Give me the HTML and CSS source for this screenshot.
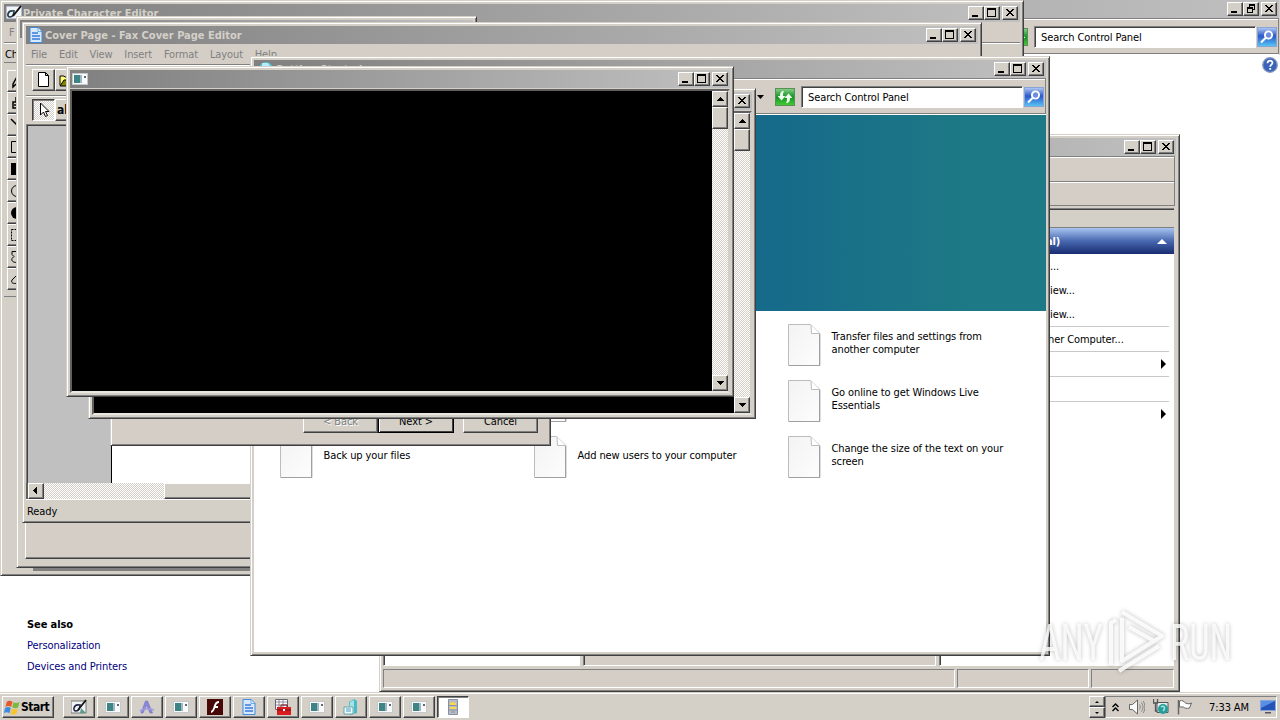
FILE: index.html
```html
<!DOCTYPE html>
<html lang="en">
<head>
<meta charset="utf-8">
<title>Desktop</title>
<link rel="stylesheet" href="styles.css">
</head>
<body>
<svg class="defs" width="0" height="0">
  <defs>
    <linearGradient id="paper" x1="0" y1="0" x2="1" y2="1"><stop offset="0" stop-color="#f3f3f3"/><stop offset="1" stop-color="#fdfdfd"/></linearGradient>
    <linearGradient id="blue" x1="0" y1="0" x2="0" y2="1"><stop offset="0" stop-color="#b4ccf4"/><stop offset=".45" stop-color="#2c58cc"/><stop offset="1" stop-color="#58c8f4"/></linearGradient>
    <linearGradient id="green" x1="0" y1="0" x2="0" y2="1"><stop offset="0" stop-color="#8ad08a"/><stop offset=".5" stop-color="#109420"/><stop offset="1" stop-color="#48cc38"/></linearGradient>
  </defs>
  <symbol id="min" viewBox="0 0 12 10"><path d="M2 7h6v2H2z"/></symbol>
  <symbol id="max" viewBox="0 0 12 10"><path d="M1 0h9v9H1zM2 2v6h7V2z" fill-rule="evenodd"/></symbol>
  <symbol id="restore" viewBox="0 0 12 10"><path d="M4 0h6v6H8V5h1V2H5v1H4zM2 3h6v6H2zM3 5v3h4V5z" fill-rule="evenodd"/></symbol>
  <symbol id="close" viewBox="0 0 12 10"><path d="M2 1h2v1h1v1h2V2h1V1h2v1H9v1H8v1H7v1h1v1h1v1h1v1H8V7H7V6H5v1H4v1H2V7h1V6h1V5h1V4H4V3H3V2H2z"/></symbol>
  <symbol id="doc" viewBox="0 0 33 42"><path d="M.5.5h22l9.500 9v32H.5z" fill="url(#paper)" stroke="#bcbcbc"/><path d="M23 1l.5 8.500h8" fill="#fff" stroke="#bcbcbc"/><path d="M1 41.500h31M31.500 10v32" stroke="#a0a0a0" fill="none"/></symbol>
  <symbol id="search" viewBox="0 0 20 20"><rect x=".5" y=".5" width="19" height="19" fill="url(#blue)" stroke="#8aa4d8"/><circle cx="11.500" cy="8" r="3.600" fill="#6d8de0" stroke="#fff" stroke-width="1.900"/><path d="M8.500 11L4 15.500" stroke="#fff" stroke-width="2.200"/></symbol>
  <symbol id="refresh" viewBox="0 0 20 18"><rect x=".5" y=".5" width="19" height="17" fill="url(#green)" stroke="#589058"/><path d="M9 3C6 3 5 5 5 8H2.500l4 4.500 4-4.500H8c0-2 0-3.500 1-5zM11 15c3 0 4-2 4-5h2.500l-4-4.500-4 4.500H12c0 2 0 3.500-1 5z" fill="#f0fff0"/></symbol>
  <symbol id="con" viewBox="0 0 16 12"><rect x=".5" y=".5" width="15" height="11" fill="#fafafa" stroke="#c4c8cc"/><rect x="2" y="2" width="6" height="8" fill="#3f8484"/><path d="M8 2h2v8H8z" fill="#9cb8c4"/><path d="M12 3h2v2h-2z" fill="#606878"/></symbol>
  <symbol id="fax" viewBox="0 0 14 16"><path d="M1 .5h8l4 4v11H1z" fill="#d7eafc" stroke="#438adb"/><path d="M9 .5v4h4z" fill="#f6fbff" stroke="#438adb" stroke-width=".7"/><path d="M3 6h6M3 9h8M3 12h8" stroke="#3c78dc" stroke-width="1.600"/></symbol>
  <symbol id="pce" viewBox="0 0 16 16"><path d="M0 1h16v13H0z" fill="#f2f5f8" stroke="#889"/><path d="M7 6C2 5 0 12 4 12s4-5 4-7" fill="none" stroke="#223c50" stroke-width="1.700"/><path d="M15 1L7 11" stroke="#111" stroke-width="2"/></symbol>
  <symbol id="up" viewBox="0 0 12 12"><path d="M6 4h1v1h1v1h1v1h1v1H3V7h1V6h1V5h1z"/></symbol>
  <symbol id="down" viewBox="0 0 12 12"><path d="M3 4h7v1H9v1H8v1H7v1H6V7H5V6H4V5H3z"/></symbol>
</svg>

<main class="desktop">
  <section class="win w-panel">
    <header class="title"><span class="ctl"><b><svg><use href="#min"/></svg></b><b><svg><use href="#restore"/></svg></b><b><svg><use href="#close"/></svg></b></span></header>
    <div class="nav"><svg class="refresh"><use href="#refresh"/></svg><div class="field">Search Control Panel</div><svg class="go"><use href="#search"/></svg></div>
    <div class="panel-body">
      <svg class="help" viewBox="0 0 16 16"><circle cx="8" cy="8" r="7.300" fill="#3a64b8" stroke="#8c9cc0" stroke-width="1.300"/><path d="M5.500 6.200c0-3.400 5-3.200 5-.4 0 1.800-2.300 1.900-2.300 4" fill="none" stroke="#fff" stroke-width="1.700"/><path d="M7.300 11h1.800v1.800H7.300z" fill="#fff"/></svg>
      <nav class="also"><strong>See also</strong><a>Personalization</a><a>Devices and Printers</a></nav>
    </div>
  </section>

  <section class="win w-event">
    <header class="title"><span class="ctl"><b><svg><use href="#min"/></svg></b><b><svg><use href="#max"/></svg></b><b><svg><use href="#close"/></svg></b></span></header>
    <div class="bar"></div><div class="bar second"></div>
    <div class="panes">
      <div class="pane p-tree"></div><div class="pane p-mid"></div>
      <div class="pane p-act">
        <div class="act-head"></div>
        <div class="act-blue"><span>al)</span><svg viewBox="0 0 10 5"><path d="M5 0l5 5H0z" fill="#fff"/></svg></div>
        <ul>
          <li>...</li><li>iew...</li><li>iew...</li><li class="rule other">her Computer...</li>
          <li class="rule"><i></i></li><li class="rule"></li><li class="rule"><i></i></li>
        </ul>
      </div>
    </div>
    <div class="cells"><div></div><div></div><div></div></div>
  </section>

  <section class="win w-pce">
    <header class="title"><svg class="ico"><use href="#pce"/></svg><span class="name">Private Character Editor</span><span class="ctl"><b><svg><use href="#min"/></svg></b><b><svg><use href="#max"/></svg></b><b><svg><use href="#close"/></svg></b></span></header>
    <div class="pce-menu">F</div>
    <div class="pce-ch">Ch</div>
    <div class="tools">
      <b><svg viewBox="0 0 16 18"><path d="M9 3L4 12v3l3-3" fill="none" stroke="#000" stroke-width="1.500"/></svg></b>
      <b><svg viewBox="0 0 16 18"><path d="M7 3v5H4v6h8M5 11h6" fill="none" stroke="#000" stroke-width="1.500"/></svg></b>
      <b><svg viewBox="0 0 16 18"><path d="M2 3l10 10" stroke="#000" stroke-width="1.500"/></svg></b>
      <b><svg viewBox="0 0 16 18"><path d="M2.500 3.500h12v11h-12z" fill="none" stroke="#000"/></svg></b>
      <b><svg viewBox="0 0 16 18"><path d="M2 3h12v12H2z"/></svg></b>
      <b><svg viewBox="0 0 16 18"><circle cx="8" cy="9" r="5.500" fill="none" stroke="#000"/></svg></b>
      <b><svg viewBox="0 0 16 18"><circle cx="8" cy="9" r="6"/></svg></b>
      <b><svg viewBox="0 0 16 18"><path d="M2.500 3.500h12v11h-12z" fill="none" stroke="#000" stroke-dasharray="2 1"/></svg></b>
      <b><svg viewBox="0 0 16 18"><path d="M8 3.500H3v3l2 2-2 2c-1 3 2 4 5 4" fill="none" stroke="#000"/></svg></b>
      <b><svg viewBox="0 0 16 18"><path d="M9 4L3 10c-1 3 0 3.500 6 3.500" fill="none" stroke="#000"/></svg></b>
    </div>
    <div class="pce-edge"></div>
  </section>

  <section class="win w-blank"><header class="title"></header><div class="raised"></div></section>

  <section class="win w-fax">
    <header class="title"><svg class="ico"><use href="#fax"/></svg><span class="name">Cover Page - Fax Cover Page Editor</span><span class="ctl"><b><svg><use href="#min"/></svg></b><b><svg><use href="#max"/></svg></b><b><svg><use href="#close"/></svg></b></span></header>
    <div class="menu"><span>File</span><span>Edit</span><span>View</span><span>Insert</span><span>Format</span><span>Layout</span><span>Help</span></div>
    <div class="tb">
      <b><svg viewBox="0 0 16 16"><path d="M2.500.5h7l3 3v11h-10zM9.500.5v3h3" fill="#fff" stroke="#000"/></svg></b>
      <b><svg viewBox="0 0 16 16"><path d="M1 13V4h4l1 1h6v3" fill="#ffff70" stroke="#000"/><path d="M1 14L5 8h11l-4 6z" fill="#848400" stroke="#000"/></svg></b>
    </div>
    <div class="tb two">
      <b class="on"><svg viewBox="0 0 16 16"><path d="M4.500 1v12l3-3 2 4.500 2-1-2-4H13z" fill="#fff" stroke="#000"/></svg></b>
      <b class="ab">ab|</b>
    </div>
    <div class="canvas"><div class="sheet"></div></div>
    <div class="hscroll"><b><svg viewBox="0 0 12 12"><path d="M7 2v7H6V8H5V7H4V6H3V5h1V4h1V3h1V2z"/></svg></b><i></i></div>
    <div class="ready">Ready</div>
  </section>

  <section class="win w-start">
    <header class="title"><svg class="ico" viewBox="0 0 16 16"><circle cx="8" cy="8" r="7" fill="#58bcd0"/><path d="M4 2h6l3 4H4z" fill="#b8ecf8"/></svg><span class="name">Getting Started</span><span class="ctl"><b><svg><use href="#min"/></svg></b><b><svg><use href="#max"/></svg></b><b><svg><use href="#close"/></svg></b></span></header>
    <div class="nav"><svg class="caret" viewBox="0 0 7 4"><path d="M0 0h7L3.500 4z"/></svg><svg class="refresh"><use href="#refresh"/></svg><div class="field">Search Control Panel</div><svg class="go"><use href="#search"/></svg></div>
    <div class="start-body">
      <div class="banner"></div>
      <div class="grid">
        <div></div><div></div><div><svg><use href="#doc"/></svg><p>Transfer files and settings from<br>another computer</p></div>
        <div></div><div><svg><use href="#doc"/></svg></div><div><svg><use href="#doc"/></svg><p>Go online to get Windows Live<br>Essentials</p></div>
        <div><svg><use href="#doc"/></svg><p>Back up your files</p></div><div><svg><use href="#doc"/></svg><p>Add new users to your computer</p></div><div><svg><use href="#doc"/></svg><p>Change the size of the text on your<br>screen</p></div>
      </div>
    </div>
  </section>

  <section class="win w-wiz"><div class="wiz-btns"><span class="off">&lt; Back</span><span class="def">Next &gt;</span><span class="cancel">Cancel</span></div></section>

  <section class="win con c2">
    <header class="title"><span class="ctl"><b><svg><use href="#close"/></svg></b></span></header>
    <div class="screen"><div class="vscroll"><b><svg><use href="#up"/></svg></b><i></i><b class="end"><svg><use href="#down"/></svg></b></div></div>
  </section>
  <section class="win con c1">
    <header class="title"><svg class="ico cico"><use href="#con"/></svg><span class="ctl"><b><svg><use href="#min"/></svg></b><b><svg><use href="#max"/></svg></b><b><svg><use href="#close"/></svg></b></span></header>
    <div class="screen"><div class="vscroll"><b><svg><use href="#up"/></svg></b><i></i><b class="end"><svg><use href="#down"/></svg></b></div></div>
  </section>

  <footer class="taskbar">
    <div class="start"><svg viewBox="0 0 18 18"><path d="M3 3c2-1.500 4-1.500 6 0L7.500 8.500c-2-1.300-4-1.300-6 0z" fill="#e8562a"/><path d="M10 3.500c2 1 4 1 6.500-.3L15 8.800c-2 1.200-4 1.200-6.300 0z" fill="#7cb83c"/><path d="M1.200 9.500c2-1.300 4-1.300 6 0L5.800 15c-2-1.300-4-1.300-6 0z" fill="#3c8ce0"/><path d="M8.400 10c2 1.200 4 1.200 6.300 0l-1.500 5.600c-2 1.200-4 1.200-6.300 0z" fill="#f6c42c"/></svg>Start</div>
    <div class="tasks">
      <b><svg viewBox="0 0 16 16"><path d="M0 2h15v12H0z" fill="#eef3f3" stroke="#777"/><path d="M8 6C3 5 1 12 5 12s4-5 4-7" fill="none" stroke="#224" stroke-width="1.500"/><path d="M15 1L7 11" stroke="#111" stroke-width="1.800"/><path d="M10 9l5 5h-6z" fill="#5c9c8c"/></svg></b>
      <b><svg class="c"><use href="#con"/></svg></b>
      <b><svg viewBox="0 0 16 16"><path d="M2 14L6.500 2h2l5 12h-2.500L7.500 6 4 14z" fill="#8c88dc" stroke="#6c70b8" stroke-width=".6"/><path d="M1 12c4-3 9-3 14-1" fill="none" stroke="#a09ce4" stroke-width="1.800"/></svg></b>
      <b><svg class="c"><use href="#con"/></svg></b>
      <b><svg viewBox="0 0 16 16"><path d="M0 0h16v16H0z" fill="#480808"/><path d="M12 3C8 3 8 7 7 9.500S5.500 13 4 13M7 8h4" fill="none" stroke="#fff" stroke-width="1.900"/></svg></b>
      <b><svg><use href="#fax"/></svg></b>
      <b><svg viewBox="0 0 16 16"><path d="M.5.500h12v10H.5z" fill="#fff" stroke="#667"/><path d="M1 3h11M1 6h11M4 1v9M8 1v9" stroke="#778" stroke-width=".8"/><path d="M2 8h14v8H2z" fill="#d81c20"/><path d="M6 8V6h6v2M2 11h14" fill="none" stroke="#801014"/><path d="M8 10h2v2H8z" fill="#fff"/></svg></b>
      <b><svg class="c"><use href="#con"/></svg></b>
      <b><svg viewBox="0 0 16 16"><path d="M6 3l5-3 3 2v12l-7 2z" fill="#4cb8c4"/><path d="M7 3l4-2v13l-4 1z" fill="#a0e4e8"/><path d="M1 8h9v7H1z" fill="#f0ffff" stroke="#64a4ac"/><path d="M3 10h5M3 12h5" stroke="#4894bc"/></svg></b>
      <b><svg class="c"><use href="#con"/></svg></b>
      <b><svg class="c"><use href="#con"/></svg></b>
      <b class="on"><svg viewBox="0 0 16 16"><path d="M3.500.5h9v15h-9z" fill="#b8bcc8" stroke="#8a909c"/><path d="M5 4l2-1 4 1v2H5zM5 8h6v2H5z" fill="#f8d84c"/><path d="M4 6.500h8M4 11h8M6 13h4" stroke="#8a92a4"/></svg></b>
    </div>
    <div class="spin"><b><svg viewBox="0 0 12 6"><path d="M6 2l2 2H4z"/></svg></b><b><svg viewBox="0 0 12 6"><path d="M4 2h4L6 4z"/></svg></b></div>
    <div class="tray">
      <svg class="chev" viewBox="0 0 7 9"><path d="M.5 4l3-3 3 3M.5 8l3-3 3 3" fill="none" stroke="#000" stroke-width="1.400"/></svg>
      <svg class="spk" viewBox="0 0 16 16"><path d="M.5 5.500h3l5-4.500v14L3.500 10.500h-3z" fill="#fafafa" stroke="#666"/><path d="M10.500 5.500c1 1.500 1 3.500 0 5M12.500 3.500c2 3 2 6 0 9M14.300 2c2 4 2 8 0 12" fill="none" stroke="#888"/></svg>
      <svg class="net" viewBox="0 0 16 16"><path d="M4 3.500h11v10H4z" fill="#e4f0f0" stroke="#555"/><circle cx="10" cy="10" r="5" fill="#289c9c"/><path d="M8 8c3-2 5 1 2 4" stroke="#9ee8d8" stroke-width="1.500" fill="none"/><path d="M.5 0v4h4V0M2.500 4v8h2" fill="none" stroke="#555" stroke-width="1.300"/></svg>
      <svg class="flag" viewBox="0 0 16 16"><path d="M1.500 1v14.500" stroke="#666" stroke-width="1.500"/><path d="M2.500 2c3-1 4 0 6 2 2 1 4 1 6 0l-2 5c-3 1-5 0-6-1H2.500z" fill="#fcfcfc" stroke="#666"/></svg>
      <span class="clock">7:33 AM</span>
      <svg class="mon" viewBox="0 0 16 14"><path d="M.5.500h15v10H.5z" fill="#2454b8" stroke="#8ca4d8"/><path d="M1 1h14L1 8z" fill="#5890e4"/><path d="M5 12h6v1.500H5z" fill="#556"/></svg>
    </div>
  </footer>

  <svg class="mark" viewBox="0 0 220 70">
    <g fill="#fff" fill-opacity=".8" font-family="Roboto, sans-serif" font-size="50"><text x="3" y="54" textLength="64" lengthAdjust="spacingAndGlyphs">ANY</text><text x="134" y="54" textLength="62" lengthAdjust="spacingAndGlyphs">RUN</text></g>
    <g fill="none" stroke="#fff" stroke-opacity=".85" stroke-width="4" stroke-linejoin="round"><path d="M86 6L126 30 86 55V12M93 21L118 35M80 14l-5 3v42M83 65L123 40"/></g>
  </svg>
</main>
</body>
</html>
```

FILE: styles.css
```css
* { box-sizing: border-box; }
body { margin: 0; overflow: hidden; font: 11px/13px "DejaVu Sans Condensed", "DejaVu Sans", sans-serif; font-stretch: condensed; letter-spacing: -.1px; color: #000; }
p, ul { margin: 0; padding: 0; list-style: none; }
svg { display: block; flex: none; }
.defs { position: absolute; }
.desktop { position: relative; width: 1280px; height: 720px; overflow: hidden; background: #fff; }

.win { position: absolute; display: flex; flex-direction: column; padding: 3px; overflow: hidden; background: #d4d0c8; border: 1px solid; border-color: #d4d0c8 #404040 #404040 #d4d0c8; box-shadow: inset 1px 1px #fff, inset -1px -1px #808080; }
.title { display: flex; align-items: center; flex: none; height: 18px; padding: 0 2px; background: linear-gradient(90deg, #808080, #c0c0c0); color: #d4d0c8; font-weight: bold; letter-spacing: 0; white-space: nowrap; }
.ico { width: 16px; height: 16px; margin-right: 1px; }
.cico { height: 12px; }
.ctl { display: flex; margin-left: auto; }
.ctl b { width: 16px; height: 14px; padding: 1px; }
.ctl b:last-child { margin-left: 2px; }
.ctl svg { width: 12px; height: 10px; }
.ctl b, .tb b, .tools b, .vscroll b, .vscroll i, .hscroll b, .hscroll i, .start, .tasks b, .spin b, .wiz-btns span { display: block; background: #d4d0c8; border: 1px solid; border-color: #fff #404040 #404040 #fff; box-shadow: inset -1px -1px #808080; }

.nav { display: flex; align-items: center; justify-content: flex-end; flex: none; height: 37px; padding: 1px 2px 0 0; background: #d4cec7; border-bottom: 1px solid #fff; box-shadow: inset 0 1px #808080, inset -1px -1px #808080, inset 0 2px #fff; }
.refresh { width: 20px; height: 18px; margin-right: 6px; }
.caret { width: 7px; height: 4px; margin-right: 11px; }
.field { width: 222px; height: 22px; padding: 4px 6px; background: #fff; border: 1px solid; border-color: #808080 #fff #fff #808080; box-shadow: inset 1px 1px #404040; }
.go { width: 20px; height: 20px; margin-left: 1px; }

.w-panel { left: -4px; top: -4px; width: 1288px; height: 700px; }
.w-panel .title, .w-panel .nav { width: 1279px; }
.w-panel .refresh { margin-right: 6px; }
.panel-body { flex: 1; display: flex; flex-direction: column; background: #fff; }
.help { width: 16px; height: 16px; align-self: flex-end; margin: 2px 2px 0 0; }
.also { display: flex; flex-direction: column; gap: 8px; margin: 545px 0 0 27px; color: #000080; }
.also strong { color: #000; }

.w-event { left: 379px; top: 134px; width: 801px; height: 558px; }
.bar { flex: none; height: 26px; margin-right: 1px; background: #d4cec7; border: 1px solid #808080; border-left: 0; box-shadow: inset 0 1px #fff; }
.bar.second { height: 24px; border-top: 0; margin-bottom: 2px; }
.panes { flex: 1; display: flex; gap: 3px; min-height: 0; margin-right: 2px; }
.pane { background: #fff; border: 1px solid; border-color: #808080 #fff #fff #808080; box-shadow: inset 1px 1px #404040; }
.p-tree { width: 197px; }
.p-mid { width: 353px; background: #d4cec7; }
.p-act { flex: 1; padding: 1px 0 0 1px; border-right: 0; }
.act-head { height: 18px; background: #d4d0c8; border-bottom: 1px solid #808080; }
.act-blue { display: flex; align-items: center; justify-content: space-between; height: 26px; padding: 1px 7px 0 105px; color: #fff; font-weight: bold; background: linear-gradient(#a8c4f0, #4868b0 50%, #182c70); }
.act-blue svg { width: 10px; height: 5px; }
.p-act ul { padding: 0 5px 0 0; }
.p-act li { height: 24px; padding: 6px 0 0 109px; }
.p-act .rule { height: 25px; border-top: 1px solid #c8c8c8; }
.p-act .other { padding-left: 107px; }
.p-act i { display: block; width: 5px; height: 10px; margin: 1px 3px 0 auto; background: #000; clip-path: polygon(0 0, 100% 50%, 0 100%); }
.cells { display: flex; flex: none; gap: 2px; height: 19px; margin: 3px 2px 0 0; }
.cells div { width: 132px; border: 1px solid; border-color: #808080 #fff #fff #808080; background: #d4cec7; }
.cells div:first-child { width: auto; flex: 1; }
.cells div:last-child { width: 83px; }

.w-pce { left: 0; top: 0; width: 1024px; height: 576px; }
.pce-menu { flex: none; height: 21px; padding: 4px 5px; color: #808080; background: #d4cec7; border-bottom: 1px solid #808080; }
.pce-ch { flex: none; height: 20px; padding: 4px 1px; border-bottom: 1px solid #808080; border-top: 1px solid #fff; }
.tools { display: flex; flex-direction: column; width: 30px; flex: none; padding: 7px 0 6px 3px; border-bottom: 1px solid #808080; }
.tools b { width: 24px; height: 22px; padding: 1px; }
.tools svg { width: 16px; height: 18px; }
.pce-edge { margin: auto 0 1px 29px; height: 3px; background: #808080; }

.w-blank { left: 16px; top: 16px; width: 461px; height: 552px; }
.raised { flex: 1; margin: 0 5px; margin-bottom: 5px; background: #d4cec7; border: 1px solid; border-color: #fff #404040 #404040 #fff; box-shadow: inset -1px -1px #808080; }

.w-fax { left: 22px; top: 22px; width: 960px; height: 501px; }
.menu { display: flex; flex: none; height: 20px; padding: 4px 0 0 5px; gap: 11.8px; color: #808080; background: #d4cec7; }
.tb { display: flex; flex: none; height: 31px; padding: 4px 6px 0; border-top: 1px solid #808080; box-shadow: inset 0 1px #fff; }
.tb b { width: 23px; height: 22px; padding: 2px 3px; }
.tb svg { width: 16px; height: 16px; }
.tb.two { height: 29px; padding-top: 3px; }
.tb b.on { border-color: #404040 #fff #fff #404040; box-shadow: inset 1px 1px #808080; background: conic-gradient(#fff 25%, #d4d0c8 0 50%, #fff 0 75%, #d4d0c8 0) 0 0 / 2px 2px; }
.tb .ab { padding-left: 1px; font: bold 12px/16px "DejaVu Sans Condensed", sans-serif; }
.canvas { flex: 1; display: flex; min-height: 0; padding-left: 84px; background: #c0c0c0; border: 1px solid #808080; border-bottom: 0; box-shadow: inset 1px 1px #404040; }
.sheet { flex: 1; margin-top: 20px; background: #fff; border-left: 1px solid #000; }
.hscroll { display: flex; flex: none; height: 16px; border-left: 2px solid #606060; background: conic-gradient(#fff 25%, #d4d0c8 0 50%, #fff 0 75%, #d4d0c8 0) 0 0 / 2px 2px; }
.hscroll b { width: 16px; padding: 1px; }
.hscroll b svg { width: 12px; height: 12px; }
.hscroll i { width: 400px; margin-left: 120px; }
.ready { flex: none; height: 20px; padding: 5px 1px; border-top: 1px solid #fff; }

.w-start { left: 250px; top: 56px; width: 800px; height: 600px; }
.w-start .title { padding-left: 4px; }
.start-body { flex: 1; background: #fff; }
.banner { height: 196px; background: linear-gradient(90deg, #156088 40%, #166a8a 65%, #1d7985 90%); }
.grid { display: grid; grid-template-columns: repeat(3, 254px); grid-auto-rows: 56px; padding: 13px 0 0 26px; }
.grid > div { display: flex; gap: 10.500px; }
.grid svg { width: 33px; height: 42px; }
.grid p { align-self: flex-start; height: 38px; display: flex; flex-direction: column; justify-content: center; white-space: nowrap; }

.w-wiz { left: 110px; top: 100px; width: 441px; height: 346px; background: #d4cec7; justify-content: flex-end; }
.wiz-btns { display: flex; justify-content: flex-end; padding: 0 9px 9px 0; }
.wiz-btns span { width: 75px; height: 23px; padding-top: 4px; text-align: center; }
.wiz-btns .off { color: #808080; text-shadow: 1px 1px #fff; }
.wiz-btns .def { width: 76px; border: 1px solid #000; box-shadow: inset 1px 1px #fff, inset -1px -1px #404040; }
.wiz-btns .cancel { margin-left: 9px; }

.con { width: 668px; height: 331px; }
.c1 { left: 66px; top: 66px; }
.c2 { left: 88px; top: 88px; }
.screen { flex: 1; display: flex; justify-content: flex-end; margin-top: 1px; background: #000; border: 2px solid; border-color: #606060 #d4d0c8 #e8e6e0 #606060; }
.vscroll { display: flex; flex-direction: column; width: 16px; background: conic-gradient(#fff 25%, #d4d0c8 0 50%, #fff 0 75%, #d4d0c8 0) 0 0 / 2px 2px; }
.vscroll b { height: 16px; padding: 1px; }
.vscroll svg { width: 12px; height: 12px; }
.vscroll i { height: 22px; }
.vscroll .end { margin-top: auto; }

.taskbar { position: absolute; left: 0; top: 692px; display: flex; align-items: flex-start; width: 1280px; height: 28px; padding: 4px 3px 0 2px; background: #d4d0c8; box-shadow: inset 0 1px #d4d0c8, inset 0 2px #fff; }
.start { display: flex !important; align-items: center; width: 52px; height: 22px; padding-left: 1px; font-weight: bold; font-size: 12px; letter-spacing: -.5px; }
.start svg { width: 17px; height: 17px; }
.tasks { display: flex; gap: 2px; margin-left: 9px; }
.tasks b { display: flex; align-items: center; justify-content: center; width: 32px; height: 22px; }
.tasks svg { width: 16px; height: 16px; }
.tasks svg.c { width: 16px; height: 12px; }
.tasks .on { background: #fff; border-color: #404040 #fff #fff #404040; box-shadow: inset 1px 1px #808080; }
.spin { margin: 0 0 0 auto; }
.spin b { width: 16px; height: 11px; padding: 2px 1px; }
.spin svg { width: 12px; height: 6px; }
.tray { display: flex; align-items: center; width: 172px; height: 22px; padding-left: 6px; border: 1px solid; border-color: #808080 #fff #fff #808080; background: #d4cec7; }
.chev { width: 7px; height: 9px; margin-right: 10px; }
.spk { width: 16px; height: 16px; margin-right: 8px; }
.net { width: 16px; height: 16px; margin-right: 8px; }
.flag { width: 16px; height: 16px; margin-right: 16px; }
.clock { width: 42px; white-space: nowrap; }
.mon { width: 16px; height: 14px; margin-left: 9px; }
.mark { position: absolute; left: 1036px; top: 606px; width: 220px; height: 70px; overflow: visible; filter: drop-shadow(0 0 2px rgba(0, 0, 0, .3)); }
```
